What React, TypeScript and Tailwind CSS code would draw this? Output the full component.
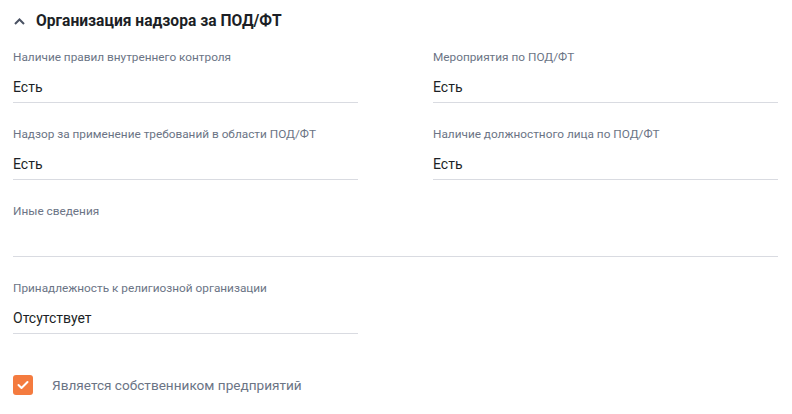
import React from 'react';

const font = { fontFamily: "Roboto, 'Liberation Sans', sans-serif" };

const Field = ({ label, value }: { label: string; value?: string }) => (
  <div className="flex flex-col">
    <span className="text-[11.8px] leading-[14px] text-[#6b7485]">{label}</span>
    <span className="mt-[15px] h-[17px] text-[14px] leading-[17px] text-[#1c1f26]">{value}</span>
    <div className="mt-[6px] h-px bg-[#d9dbe1]" />
  </div>
);

export default function App() {
  return (
    <div className="w-[792px] h-[414px] bg-white px-[13px] pt-[10px]" style={font}>
      <div className="flex items-center gap-[11px] h-[22px]">
        <svg width="11" height="7" viewBox="0 0 11 7" className="ml-[1px]">
          <path d="M1 6 L5.5 1.5 L10 6" fill="none" stroke="#4a5263" strokeWidth="2" />
        </svg>
        <h2 className="text-[15.6px] font-bold text-[#1c1f26] leading-[22px]">Организация надзора за ПОД/ФТ</h2>
      </div>

      <div className="mt-[18px] grid grid-cols-[345px_345px] gap-x-[75px] gap-y-[24px]">
        <Field label="Наличие правил внутреннего контроля" value="Есть" />
        <Field label="Мероприятия по ПОД/ФТ" value="Есть" />
        <Field label="Надзор за применение требований в области ПОД/ФТ" value="Есть" />
        <Field label="Наличие должностного лица по ПОД/ФТ" value="Есть" />
        <div className="col-span-2">
          <Field label="Иные сведения" value="" />
        </div>
        <Field label="Принадлежность к религиозной организации" value="Отсутствует" />
      </div>

      <label className="mt-[41px] flex items-center gap-[19px]">
        <span className="flex h-[20px] w-[20px] items-center justify-center rounded-[3px] bg-[#f47b3f]">
          <svg width="12" height="10" viewBox="0 0 12 10">
            <path d="M1.5 5 L4.5 8 L10.5 2" fill="none" stroke="white" strokeWidth="2" strokeLinecap="round" strokeLinejoin="round" />
          </svg>
        </span>
        <span className="text-[13.6px] text-[#6b7485]">Является собственником предприятий</span>
      </label>
    </div>
  );
}
